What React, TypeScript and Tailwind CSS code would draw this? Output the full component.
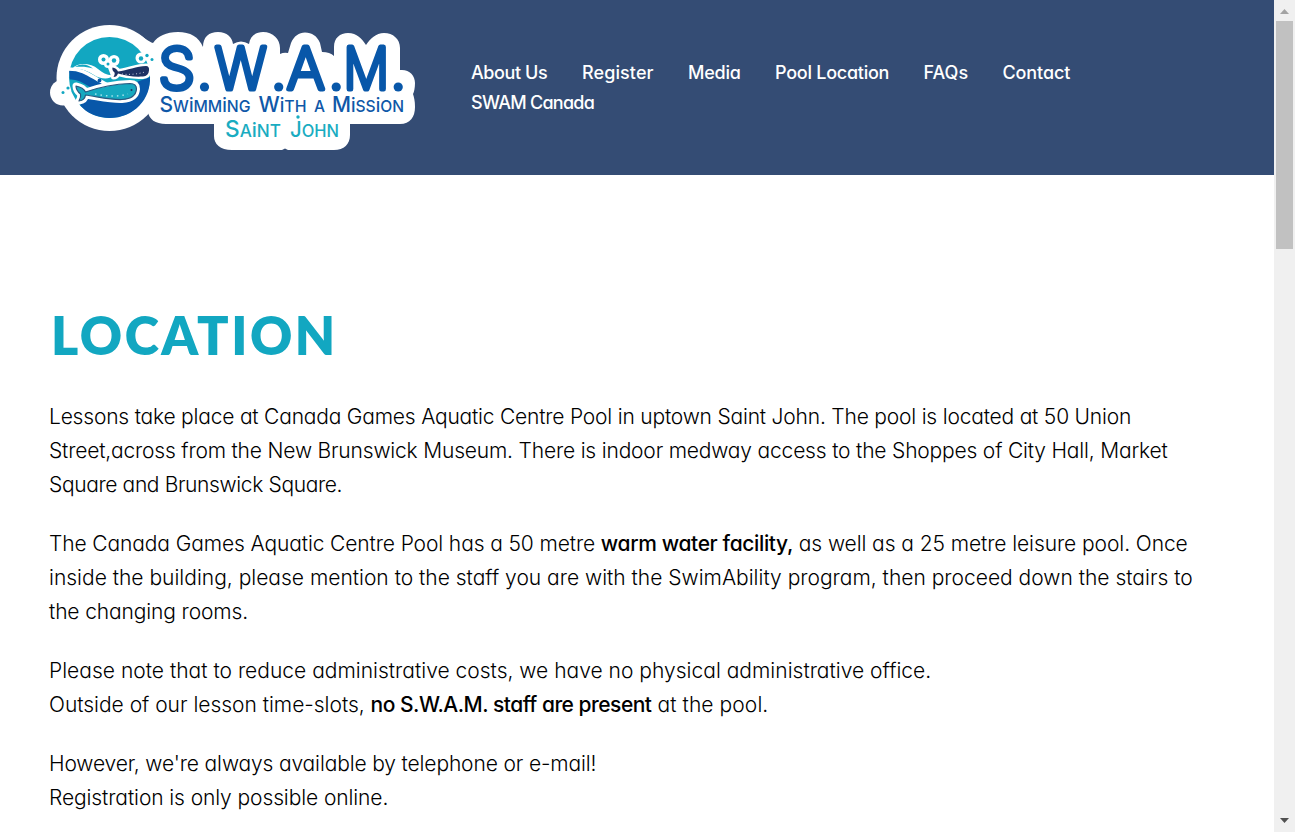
const navItems = [
  { label: "About Us", style: "w-[77px] tracking-[-0.4px]" },
  { label: "Register", style: "w-[72px] tracking-[0.1px]" },
  { label: "Media", style: "w-[53px] tracking-[-0.2px]" },
  { label: "Pool Location", style: "w-[114.5px] tracking-[-0.25px]" },
  { label: "FAQs", style: "w-[45px] tracking-[0px]" },
  { label: "Contact", style: "w-[68px] tracking-[-0.1px]" },
  { label: "SWAM Canada", style: "w-[124px] tracking-[-0.72px]" },
];

const letters = [
  { c: "S", x: 108.5, w: 36.5 },
  { c: "W", x: 165, w: 51.5 },
  { c: "A", x: 237, w: 37.5 },
  { c: "M", x: 293.5, w: 45.5 },
];

function Logo() {
  return (
    <svg
      width="365"
      height="125"
      viewBox="0 0 365 125"
      role="img"
      aria-label="S.W.A.M. Swimming With a Mission Saint John"
      fontFamily="Inter"
    >
      <g fill="#fff">
        <circle cx="59.5" cy="53" r="53" />
        <circle cx="13" cy="67.5" r="13" />
        <path d="M86 8C94 12 99 17 103 18C108 11 116 7 128 7C140 7 149 12 153 22C153 12 159 7 168 7C177 7 182 12 183 19Q191 14 199 19C200 11 206 7 213 7C223 7 230 14 230 23V29Q234 27 238 28L241 18C244 11 249 7.5 255 7.5C262 7.5 267 11 270 18L272 27Q280 27 284 31V22C284 13 290 8 298 8C307 8 312 14 316 20C320 14 326 8 334 8C343 8 350 14 350 23V45C359 44 365 50 365 58C365 63 364 67 363 69C364 72 365 76 365 82C365 92 360 99 350 99H300V110C300 119 294 125 284 125H238L235 123.500 232 125H182C170 125 164 119 164 111V99H116C105 99 99 94 98 87Z" />
        <path d="M17 78 28 92 58 104 30 60Z" />
      </g>

      <circle cx="59.5" cy="52.5" r="40.5" fill="#12a7c1" />
      <path
        d="M19 47C33 46 44 57 52 61C67 65 85 58 100 52C101 74 84 93 59.5 93C48 93 36 88 30 80L50 60Z"
        fill="#0857a9"
      />
      <path d="M19.500 50C33 49 42 60 54 64" fill="none" stroke="#0857a9" strokeWidth="9" />
      <path d="M19 44C36 44 42 53 58 60" fill="none" stroke="#fff" strokeWidth="3.5" />
      <path d="M22 44C27 37 41 38 48 44C53 48 58 51 64 50C60 55 50 54 44 50C38 46 30 43 22 44Z" fill="#fff" />
      <path d="M25 42C31 38 37 39 43 43.500C37 41.500 31 41.500 25 42Z" fill="#12a7c1" />
      <g fill="#0857a9">
        <circle cx="49.500" cy="55.500" r="1.900" />
        <circle cx="45.500" cy="58.500" r="1.200" />
      </g>

      {/* Bubbles */}
      <g fill="#fff">
        <circle cx="53.500" cy="34.500" r="5.500" />
        <circle cx="64" cy="35.500" r="5.500" />
        <circle cx="58" cy="39" r="4" />
        <circle cx="91" cy="33" r="5.500" />
        <path d="M57 40 61 51H67L64 38Z" />
      </g>
      <g fill="#12a7c1">
        <circle cx="53.500" cy="34.500" r="2" />
        <circle cx="64" cy="35.500" r="2.200" />
        <circle cx="58" cy="39" r="1.500" />
        <circle cx="91" cy="33.500" r="2.200" />
        <circle cx="97" cy="30.500" r="1.700" />
        <circle cx="102" cy="34.500" r="1.500" />
        <circle cx="13" cy="67.500" r="1.500" />
        <circle cx="18" cy="63" r="1.600" />
        <circle cx="23.500" cy="66" r="2" />
      </g>

      {/* Small whale */}
      <path
        d="M62.500 42.500C65 43 67 44 68 46.500C77 45.500 87 41 96 41Q99.500 41 99 45.500Q98.500 51 93 51.500C84 52 76 51 68 48.500C67 51 66 52 63.500 52C64.500 50 65 49 64.500 47.500C62.500 46 62 44 62.500 42.500Z"
        fill="#1e3263"
        stroke="#fff"
        strokeWidth="5"
        strokeLinejoin="round"
        paintOrder="stroke"
      />
      <path d="M72 49C80 50 88 49 95 47" fill="none" stroke="#c4cadb" strokeWidth="1" strokeDasharray="1 2.500" />

      {/* Large whale */}
      <path
        d="M26 61C31 62 34 64 35.500 67C47 63 66 59 80 58.500Q86.500 58.500 86.500 64C86 71 81 74 72 74.500C60 75 47 71.500 35.500 70C35 74 33 75.500 29 76C31 73 31 71 30.500 69C28 67 26 64 26 61Z"
        fill="#16a8bf"
        stroke="#fff"
        strokeWidth="7"
        strokeLinejoin="round"
        paintOrder="stroke"
      />
      <path
        d="M26 61C31 62 34 64 35.500 67C47 63 66 59 80 58.500Q86.500 58.500 86.500 64C86 71 81 74 72 74.500C60 75 47 71.500 35.500 70C35 74 33 75.500 29 76C31 73 31 71 30.500 69C28 67 26 64 26 61Z"
        fill="none"
        stroke="#29577f"
        strokeWidth="1.200"
        strokeLinejoin="round"
      />
      <path d="M45 69C57 71.500 68 72 78 69" fill="none" stroke="#a4e2eb" strokeWidth="1.500" strokeDasharray="1.500 4" />
      <circle cx="81.500" cy="65" r="1" fill="#1e3263" />

      {/* Wordmark */}
      <g
        fill="#0857a9"
        stroke="#0857a9"
        strokeWidth="5"
        strokeLinejoin="round"
        strokeLinecap="round"
        fontSize="57"
        fontWeight="200"
      >
        {letters.map((l) => (
          <text key={l.c} x={l.x} y="64" textLength={l.w} lengthAdjust="spacingAndGlyphs">
            {l.c}
          </text>
        ))}
      </g>
      <g fill="#0857a9">
        <circle cx="154.500" cy="62" r="4.600" />
        <circle cx="228.700" cy="62" r="4.600" />
        <circle cx="286.200" cy="62" r="4.600" />
        <circle cx="348.200" cy="62" r="4.600" />
      </g>
      <g fill="#0f58a8" fontSize="16.500" fontWeight="500">
        <text x="109.500" y="87" textLength="91" lengthAdjust="spacingAndGlyphs">
          <tspan fontSize="22">S</tspan>W<tspan fontSize="19">i</tspan>MM<tspan fontSize="19">i</tspan>NG
        </text>
        <text x="208.500" y="87" textLength="48" lengthAdjust="spacingAndGlyphs">
          <tspan fontSize="22">W</tspan>
          <tspan fontSize="19">i</tspan>TH
        </text>
        <text x="264" y="87" textLength="11" lengthAdjust="spacingAndGlyphs">A</text>
        <text x="282" y="87" textLength="72" lengthAdjust="spacingAndGlyphs">
          <tspan fontSize="22">M</tspan>
          <tspan fontSize="19">i</tspan>SS<tspan fontSize="19">i</tspan>ON
        </text>
      </g>
      <g fill="#19acc1" fontSize="17" fontWeight="500">
        <text x="175" y="112" textLength="56" lengthAdjust="spacingAndGlyphs">
          <tspan fontSize="22.500">S</tspan>A<tspan fontSize="20">i</tspan>NT
        </text>
        <text x="240" y="112" textLength="49" lengthAdjust="spacingAndGlyphs">
          <tspan fontSize="21">J</tspan>OHN
        </text>
      </g>
      <circle cx="248" cy="92" r="1.700" fill="#19acc1" />
    </svg>
  );
}

function Scrollbar() {
  return (
    <div className="flex w-[21px] shrink-0 flex-col items-center bg-[#f0f0f0]">
      <svg width="21" height="21" viewBox="0 0 21 21">
        <path d="M6 14 10.500 9 15 14Z" fill="#a3a3a3" />
      </svg>
      <div className="h-[228px] w-[17px] bg-[#c1c1c1]" />
      <svg width="21" height="21" viewBox="0 0 21 21" className="mt-auto">
        <path d="M6 7 10.500 12 15 7Z" fill="#505050" />
      </svg>
    </div>
  );
}

export default function App() {
  return (
    <div className="flex h-[832px] overflow-hidden bg-white font-['Inter',sans-serif] text-black [font-feature-settings:'cv11']">
      <div className="min-w-0 flex-1">
        <header className="flex h-[175px] items-center bg-[#344c74] pl-[50px]">
          <Logo />
          <nav className="ml-[56px] w-[720px]">
            <ul className="flex flex-wrap gap-x-[34px] text-[18px] leading-[30px] font-medium text-white">
              {navItems.map((item) => (
                <li key={item.label} className={item.style + " whitespace-nowrap"}>
                  <a href="#">{item.label}</a>
                </li>
              ))}
            </ul>
          </nav>
        </header>

        <main className="pt-[130px] pl-[49px] text-[21px] leading-[34px] font-light whitespace-nowrap">
          <h1 className="pl-[2px] font-['Lato',sans-serif] text-[52px] leading-[60px] font-extrabold tracking-[2.5px] text-[#12a7c1]">
            LOCATION
          </h1>
          <div className="mt-[35px] flex flex-col gap-[25px]">
            <p>
              <span className="block tracking-[-0.2px]">
                Lessons take place at Canada Games Aquatic Centre Pool in uptown Saint John. The pool is located at 50 Union
              </span>
              <span className="block tracking-[-0.182px]">
                Street,across from the New Brunswick Museum. There is indoor medway access to the Shoppes of City Hall, Market
              </span>
              <span className="block tracking-[-0.37px]">Square and Brunswick Square.</span>
            </p>
            <p>
              <span className="block tracking-[-0.113px]">
                The Canada Games Aquatic Centre Pool has a 50 metre{" "}
                <strong className="font-medium tracking-[-0.36px]">warm water facility,</strong>
                <span className="tracking-[-0.08px]"> as well as a 25 metre leisure pool. Once</span>
              </span>
              <span className="block">
                inside the building, please mention to the staff you are with the SwimAbility program, then proceed down the
                stairs to
              </span>
              <span className="block tracking-[-0.13px]">the changing rooms.</span>
            </p>
            <p>
              <span className="block tracking-[0.01px]">
                Please note that to reduce administrative costs, we have no physical administrative office.
              </span>
              <span className="block tracking-[-0.02px]">
                Outside of our lesson time-slots,{" "}
                <strong className="font-medium tracking-[-0.5px]">no S.W.A.M. staff are present</strong>
                <span className="tracking-[0.08px]"> at the pool.</span>
              </span>
            </p>
            <p>
              <span className="block tracking-[-0.14px]">However, we're always available by telephone or e-mail!</span>
              <span className="block tracking-[-0.1px]">Registration is only possible online.</span>
            </p>
          </div>
        </main>
      </div>
      <Scrollbar />
    </div>
  );
}
